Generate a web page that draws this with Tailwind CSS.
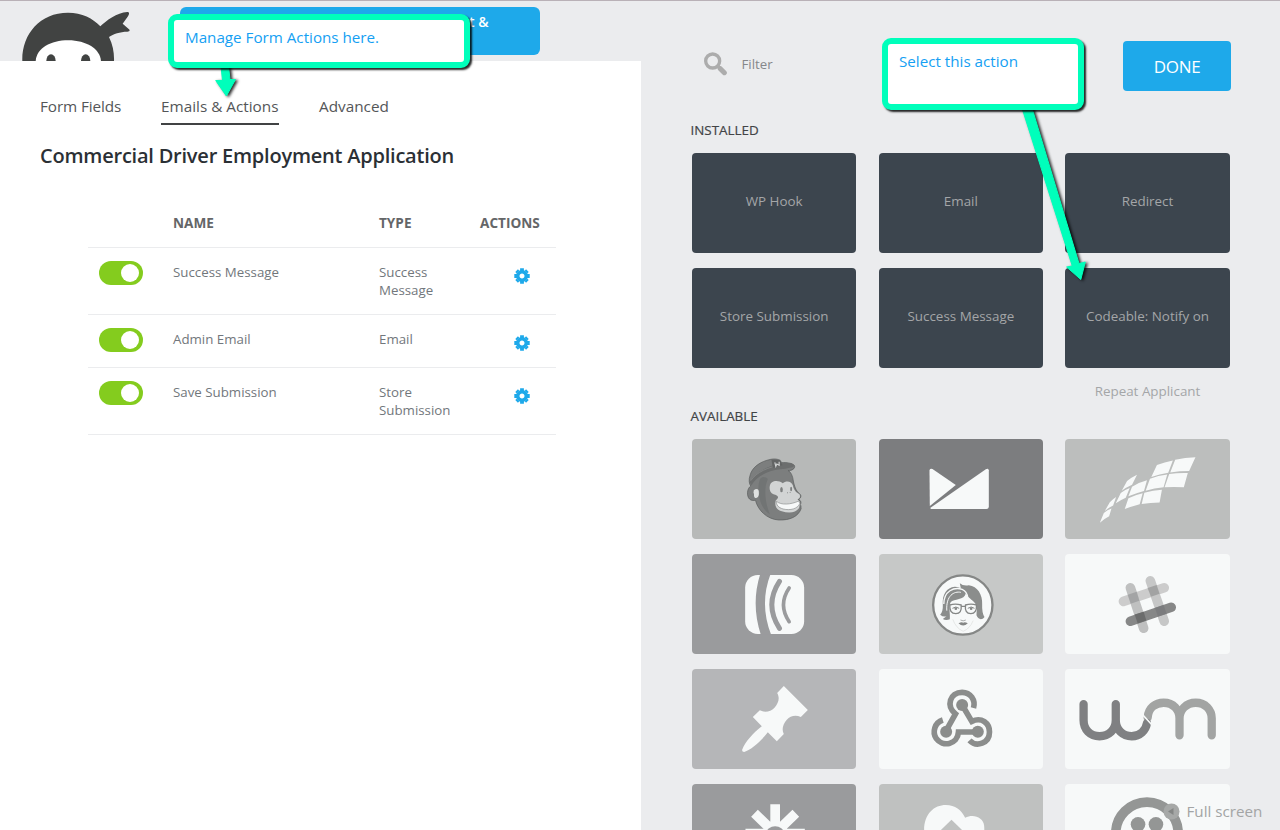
<!DOCTYPE html>
<html lang="en">
<head>
<meta charset="utf-8">
<title>Form Builder</title>
<script src="https://cdn.jsdelivr.net/npm/@tailwindcss/browser@4"></script>
</head>
<body class="relative w-[1280px] h-[830px] overflow-hidden bg-[#ebecee] font-['Open_Sans','Noto_Sans',sans-serif]">
<div class="flex h-[830px] overflow-hidden border-t border-[#b9b1b7]">
  <!-- Form side -->
  <main class="w-[641px] flex flex-col shrink-0">
    <header class="h-[60px] flex items-start shrink-0 pl-[20px]">
      <svg class="w-[112px] h-[60px] mr-[48px]" viewBox="60 3 336 180">
        <path d="M67 185C64 105 118 38 204 38C246 38 279 55 301 79C320 61 350 38 382 36C389 36 388 42 384 49L368 71L387 88C391 92 388 95 382 95C360 95 340 102 327 111C339 135 343 160 342 185Z" fill="#414342"/>
        <path d="M107 185C108 146 151 121 205 121C260 121 302 148 303 185Z" fill="#fff"/>
        <ellipse cx="153" cy="182" rx="14" ry="19" fill="#414342"/><ellipse cx="257" cy="182" rx="14" ry="19" fill="#414342"/>
      </svg>
      <div class="mt-[6px] w-[360px] h-[48px] rounded-[6px] bg-[#1ea9ea] pl-[289px] pt-[6px] text-white text-[14px] leading-[18px] font-semibold">t &amp;</div>
    </header>
    <section class="grow bg-white pl-[40px]">
      <nav class="flex pt-[32px] gap-[40px] text-[15.3px] leading-[26px] text-[#545658]">
        <a class="w-[81px] whitespace-nowrap tracking-[-0.1px]">Form Fields</a>
        <a class="w-[118px] whitespace-nowrap border-b-2 border-[#414344] h-[32px]">Emails &amp; Actions</a>
        <a class="whitespace-nowrap">Advanced</a>
      </nav>
      <h1 class="mt-[16px] text-[20px] leading-[30px] font-semibold text-[#2b3035] whitespace-nowrap tracking-[-0.22px]">Commercial Driver Employment Application</h1>
      <div class="ml-[48px] mt-[29px] w-[468px] text-[13.3px] leading-[18px] text-[#72777c]">
        <div class="grid grid-cols-[85px_206px_101px_76px] h-[48px] pt-[14px] border-b border-[#ebecee] font-bold text-[13.6px] text-[#646668]">
          <span></span><span>NAME</span><span>TYPE</span><span>ACTIONS</span>
        </div>
        <div class="grid grid-cols-[85px_206px_101px_76px] h-[67px] pt-[15px] border-b border-[#ebecee]">
          <span class="ml-[11px] -mt-[2px] w-[44px] h-[24px] rounded-full bg-[#84cc1e] flex items-center justify-end pr-[4px]"><i class="size-[18px] rounded-full bg-white"></i></span>
          <span>Success Message</span><span>Success<br>Message</span>
          <svg class="ml-[34px] mt-[4.5px] size-[16px]" viewBox="-8 -8 16 16"><circle r="4.3" fill="none" stroke="#1ea9ea" stroke-width="3.6"/><path d="M0-7.7V-5M0 7.7V5M-7.7 0H-5M7.7 0H5M-5.4-5.4L-4-4M5.4 5.4L4 4M-5.4 5.4L-4 4M5.4-5.4L4-4" stroke="#1ea9ea" stroke-width="3.8"/></svg>
        </div>
        <div class="grid grid-cols-[85px_206px_101px_76px] h-[53px] pt-[15px] border-b border-[#ebecee]">
          <span class="ml-[11px] -mt-[2px] w-[44px] h-[24px] rounded-full bg-[#84cc1e] flex items-center justify-end pr-[4px]"><i class="size-[18px] rounded-full bg-white"></i></span>
          <span>Admin Email</span><span>Email</span>
          <svg class="ml-[34px] mt-[4.5px] size-[16px]" viewBox="-8 -8 16 16"><circle r="4.3" fill="none" stroke="#1ea9ea" stroke-width="3.6"/><path d="M0-7.7V-5M0 7.7V5M-7.7 0H-5M7.7 0H5M-5.4-5.4L-4-4M5.4 5.4L4 4M-5.4 5.4L-4 4M5.4-5.4L4-4" stroke="#1ea9ea" stroke-width="3.8"/></svg>
        </div>
        <div class="grid grid-cols-[85px_206px_101px_76px] h-[67px] pt-[15px] border-b border-[#ebecee]">
          <span class="ml-[11px] -mt-[2px] w-[44px] h-[24px] rounded-full bg-[#84cc1e] flex items-center justify-end pr-[4px]"><i class="size-[18px] rounded-full bg-white"></i></span>
          <span>Save Submission</span><span>Store<br>Submission</span>
          <svg class="ml-[34px] mt-[4.5px] size-[16px]" viewBox="-8 -8 16 16"><circle r="4.3" fill="none" stroke="#1ea9ea" stroke-width="3.6"/><path d="M0-7.7V-5M0 7.7V5M-7.7 0H-5M7.7 0H5M-5.4-5.4L-4-4M5.4 5.4L4 4M-5.4 5.4L-4 4M5.4-5.4L4-4" stroke="#1ea9ea" stroke-width="3.8"/></svg>
        </div>
      </div>
    </section>
  </main>
  <!-- Action drawer -->
  <aside class="w-[639px] pl-[51px] pt-[40px] shrink-0">
    <div class="flex items-start w-[539px] h-[50px]">
      <svg class="ml-[12px] mt-[11px] size-[24px]" viewBox="72 96 72 72" fill="none" stroke="#acacac"><circle cx="98" cy="123" r="21" stroke-width="10"/><path d="M113 138L120 145" stroke-width="11"/><path d="M121 146L133 158" stroke-width="15" stroke-linecap="round"/></svg>
      <span class="ml-[13.5px] mt-[13px] text-[13.3px] leading-[20px] text-[#85878a]">Filter</span>
      <button class="ml-auto w-[108px] h-[50px] rounded-[4px] bg-[#1ea9ea] text-white text-[17px] pt-[2px] tracking-[-0.3px]">DONE</button>
    </div>
    <h2 class="mt-[29px] -ml-[1.5px] text-[13.4px] leading-[20px] font-medium text-[#424446] [-webkit-text-stroke:0.2px_#424446]">INSTALLED</h2>
    <div class="mt-[13px] grid grid-cols-[164.3px_164.3px_164.3px] auto-rows-[100px] gap-x-[22.4px] gap-y-[15px] text-[13.4px] leading-[75px] text-center text-[#a4a6a8] whitespace-nowrap">
      <div class="rounded-[4px] bg-[#3c454e] pt-[11px]">WP Hook</div>
      <div class="rounded-[4px] bg-[#3c454e] pt-[11px]">Email</div>
      <div class="rounded-[4px] bg-[#3c454e] pt-[11px]">Redirect</div>
      <div class="rounded-[4px] bg-[#3c454e] pt-[11px]">Store Submission</div>
      <div class="rounded-[4px] bg-[#3c454e] pt-[11px]">Success Message</div>
      <div class="rounded-[4px] bg-[#3c454e] pt-[11px]">Codeable: Notify on<br>Repeat Applicant</div>
    </div>
    <h2 class="mt-[38px] -ml-[1.5px] text-[13.4px] leading-[20px] font-medium text-[#424446] [-webkit-text-stroke:0.2px_#424446]">AVAILABLE</h2>
    <div class="mt-[13px] grid grid-cols-[164.3px_164.3px_164.3px] auto-rows-[100px] gap-x-[22.4px] gap-y-[15px]">
      <!-- MailChimp -->
      <svg class="size-full rounded-[4px] bg-[#b7b9b8]" viewBox="-114 -3 492 300">
        <path d="M62 138C50 145 49 168 58 177C63 182 70 182 76 181C83 210 110 238 146 240C180 241 204 230 213 206C212 202 214 198 210 194C214 189 213 182 205 178C214 174 214 165 208 161C196 152 193 137 190 126C188 108 182 95 174 92C185 92 196 86 193 77C188 69 168 67 154 68C151 58 136 55 122 58C90 64 66 82 60 105C55 120 57 132 62 138Z" fill="#7c7e7e" stroke="#585a5a" stroke-width="2"/>
        <path d="M64 136C78 110 110 93 150 88C172 85 190 82 193 77C187 68 166 67 154 70C120 76 78 93 58 126Z" fill="#6c6e6e"/>
        <path d="M62 122C78 97 115 80 152 76" fill="none" stroke="#8e9090" stroke-width="2"/>
        <path d="M124 59L150 59L157 76L128 84Z" fill="#626464"/>
        <path d="M134 67L137 79L140 72L147 76L147 65" fill="none" stroke="#d0d2d2" stroke-width="3.500"/>
        <path d="M71 151C80 143 88 149 87 159C86 169 82 177 74 173C69 168 74 163 70 158Z" fill="#dfe1e0"/>
        <path d="M90 116C79 140 84 202 119 223C105 186 100 148 113 117C106 110 98 109 90 116Z" fill="#5e6060" opacity=".35"/>
        <path d="M119 138C121 121 144 118 158 130C167 121 184 123 188 136C191 151 198 158 208 163C211 169 210 175 202 178L210 186L207 203C198 220 174 220 155 214C136 208 133 195 137 181C150 171 142 166 130 163C120 158 117 149 119 138Z" fill="#d2d4d4"/>
        <path d="M139 184C152 196 182 194 206 183L209 191C201 207 181 212 159 207C145 203 138 195 139 184Z" fill="#f7f9f9" stroke="#8a8c8c" stroke-width="2"/>
        <ellipse cx="154" cy="149" rx="4" ry="8" fill="#7e8080"/><ellipse cx="183" cy="147" rx="3" ry="7" fill="#7e8080"/><circle cx="172" cy="158" r="1.500" fill="#787a7a"/><circle cx="180" cy="157" r="1.500" fill="#787a7a"/>
      </svg>
      <!-- Campaign Monitor -->
      <svg class="size-full rounded-[4px] bg-[#7c7d7f]" viewBox="-108 -3 492 300" fill="#f7f9f9">
        <path d="M43 90Q46 84 52 87L122 135L44 198Z"/><path d="M45 204L212 88Q219 84 221 91V201Q220 207 214 207H48Z"/>
      </svg>
      <!-- Tilted grid -->
      <svg class="size-full rounded-[4px] bg-[#bcbebd]" viewBox="0 -3 495 300" fill="#f7f9f9">
        <path d="M277 75Q300 66 325 61L311 98Q285 102 260 111Z"/><path d="M332 59Q362 52 393 51L374 93Q345 93 317 97Z"/>
        <path d="M256 116Q281 106 308 103L297 142Q269 145 243 152Z"/><path d="M314 102Q341 98 370 99L358 142Q328 140 300 142Z"/>
        <path d="M202 140Q224 127 247 121L238 153Q212 160 191 169Z"/><path d="M191 175Q211 165 234 160L225 193Q200 200 180 207Z"/>
        <path d="M239 158Q265 151 292 149L285 188Q257 189 231 192Z"/><path d="M187 123Q200 112 217 104L202 134Q184 142 171 152Z"/>
        <path d="M168 159Q181 149 195 144L183 173Q165 181 153 190Z"/><path d="M135 187Q144 177 154 171L145 197Q132 203 120 213Z"/>
        <path d="M117 219Q128 210 140 206L133 229Q117 237 105 249Z"/>
      </svg>
      <!-- AWeber -->
      <svg class="size-full rounded-[4px] bg-[#9a9b9d]" viewBox="-114 342 492 300">
        <rect x="45" y="405" width="177" height="177" rx="38" fill="#f7f9f9"/>
        <path d="M90 403H121Q87 492 123 584H92Q62 492 90 403Z" fill="#9a9b9d"/>
        <path d="M148 424Q102 494 148 565" fill="none" stroke="#9a9b9d" stroke-width="15" stroke-linecap="round"/>
        <path d="M177 444Q143 494 177 545" fill="none" stroke="#9a9b9d" stroke-width="11" stroke-linecap="round"/>
      </svg>
      <!-- Emma -->
      <svg class="size-full rounded-[4px] bg-[#c6c8c7]" viewBox="-108 342 492 300">
        <circle cx="143" cy="495" r="89" fill="#f7f9f9" stroke="#858786" stroke-width="7"/>
        <path d="M75 524Q84 514 83 494C81 462 94 443 119 440C129 441 134 443 137 445L134 430Q144 439 161 436C187 438 203 466 201 492Q200 519 208 531C200 542 188 538 184 526L185 500C178 480 160 478 152 460C148 482 116 476 107 486C99 500 106 522 104 538Q92 543 83 537L94 529Q84 532 75 524Z" fill="#8b8d8c"/>
        <path d="M86 492C86 453 117 440 141 448C151 452 157 463 158 474" fill="none" stroke="#f7f9f9" stroke-width="4"/>
        <path d="M95 512C92 466 117 453 137 457" fill="none" stroke="#f7f9f9" stroke-width="3"/>
        <path d="M104 495Q120 490 138 495C140 514 134 521 122 521C108 521 103 511 104 495ZM151 495Q168 490 184 495C185 512 179 521 167 521C154 521 149 512 151 495ZM137 499H152" fill="#f7f9f9" stroke="#858786" stroke-width="4"/>
        <path d="M112 505Q122 497 132 505M158 505Q168 497 178 505" fill="none" stroke="#858786" stroke-width="3"/><circle cx="122" cy="506" r="4" fill="#858786"/><circle cx="168" cy="506" r="4" fill="#858786"/>
        <path d="M136 540Q144 545 152 540" fill="none" stroke="#858786" stroke-width="2"/><path d="M130 550Q140 545 144 548Q149 545 158 550Q144 563 130 550Z" fill="#858786"/>
        <path d="M113 538Q122 564 144 574Q164 566 174 542" fill="none" stroke="#dcdedd" stroke-width="2"/>
      </svg>
      <!-- Slack -->
      <svg class="size-full rounded-[4px] bg-[#f7f9f9]" viewBox="0 342 495 300" fill="none" stroke-linecap="round" stroke-width="29">
        <path d="M176 484L299 443" stroke="#ccc"/><path d="M197 443L237 565" stroke="#bfc0c0"/><path d="M257 422L299 544" stroke="#c6c7c7"/>
        <path d="M197 544L320 502" stroke="#868787"/>
        <g stroke="none"><path d="M189 464L216 455L224 482L198 491Z" fill="#a3a4a5"/><path d="M249 444L276 435L285 461L259 470Z" fill="#a2a3a3"/><path d="M210 524L237 515L245 542L219 551Z" fill="#6b6c6c"/><path d="M271 504L297 495L306 521L280 530Z" fill="#7b7c7e"/></g>
      </svg>
      <!-- Pushpin -->
      <svg class="size-full rounded-[4px] bg-[#b5b6b8]" viewBox="-114 12 492 300" fill="#f7f9f9">
        <path d="M161 63L233 135L212 156C196 148 180 153 170 164C158 177 154 194 161 207L140 229L113 202C91 230 65 252 42 261Q35 261 36 254C46 230 67 206 95 184L68 156L89 136C104 144 122 140 133 128C145 115 150 99 141 84Z"/>
      </svg>
      <!-- Webhooks -->
      <svg class="size-full rounded-[4px] bg-[#f7f9f9]" viewBox="-93 12 492 300" fill="none" stroke="#8b8d8c">
        <path d="M190 129C197 105 181 82 156 82C119 82 107 123 136 147L108 197" stroke-width="17"/>
        <path d="M156 120L185 169C215 155 238 175 238 201C238 235 199 248 178 226" stroke-width="17"/>
        <path d="M98 165C73 173 66 201 78 220C97 247 142 240 145 201H203" stroke-width="17"/>
        <g fill="#8b8d8c" stroke="none"><circle cx="156" cy="120" r="18"/><circle cx="108" cy="200" r="18"/><circle cx="203" cy="200" r="18"/></g>
      </svg>
      <!-- WebMerge -->
      <svg class="size-full rounded-[4px] bg-[#f7f9f9]" viewBox="15 12 495 300" fill="none" stroke-width="25" stroke-linecap="round">
        <path d="M264 158C266 128 288 113 312 113C342 113 360 135 360 160V211M360 160C360 135 380 113 409 113C438 113 457 135 457 160V211" stroke="#a2a4a3"/>
        <path d="M71 117V166C71 194 91 214 119 214C147 214 168 194 168 166V117M168 166C168 194 189 214 216 214C241 214 259 196 262 174" stroke="#7f8082"/>
        <path d="M249 149L278 181" stroke="#f7f9f9" stroke-width="5"/>
      </svg>
      <!-- Zapier -->
      <svg class="size-full rounded-[4px] bg-[#9a9b9d]" viewBox="-114 357 492 300">
        <path d="M135 418V590M46 506H224M73 445L197 564M197 445L73 564" stroke="#f7f9f9" stroke-width="29"/><ellipse cx="135" cy="504" rx="26" ry="20" fill="#9a9b9d"/>
      </svg>
      <!-- Cloud upload -->
      <svg class="size-full rounded-[4px] bg-[#bfc1c0]" viewBox="-93 357 492 300">
        <path d="M42 500C40 448 71 420 107 420C135 420 154 435 165 458C190 445 220 457 222 482C226 530 205 540 180 550H65Q42 530 42 500Z" fill="#f7f9f9"/><path d="M82 505L124 464L166 505Z" fill="#bfc1c0"/>
      </svg>
      <!-- Twilio -->
      <svg class="size-full rounded-[4px] bg-[#f7f9f9]" viewBox="15 357 495 300">
        <circle cx="262" cy="505" r="94" fill="none" stroke="#949695" stroke-width="29"/><g fill="#949695"><circle cx="235" cy="478" r="22"/><circle cx="289" cy="478" r="22"/><circle cx="235" cy="532" r="22"/><circle cx="289" cy="532" r="22"/></g>
      </svg>
    </div>
  </aside>
</div>
<!-- Full screen toggle lies over the drawer -->
<div class="absolute left-[1163px] top-[799px] flex items-center h-[24px] text-[15.200px] leading-[24px] text-[#a3a5a5] whitespace-nowrap">
  <svg class="size-[17px] mr-[6.500px]" viewBox="0 0 17 17"><circle cx="8.5" cy="8.5" r="8" fill="#a6a8a7"/><path d="M5 8.5L10.5 5V12Z" fill="#848685"/></svg>Full screen
</div>
<!-- Tutorial arrows and callouts -->
<svg class="absolute left-0 top-0 w-[1280px] h-[830px] drop-shadow-[2px_1px_1.5px_rgba(0,0,0,0.85)]" viewBox="0 0 1280 830" fill="#00ffbb" stroke="#00ffbb" stroke-width="1" stroke-linejoin="round">
  <path d="M221 66H228.500L230 79.500L235.500 79.500L226.400 96L215.700 80.500L222.500 80.500Z"/>
  <path d="M1022 108H1032L1079 263.500L1085.300 262L1080.800 279.500L1066.600 267L1072.300 266Z"/>
</svg>
<div class="absolute left-[168px] top-[14px] w-[302px] h-[54px] rounded-[9px] border-6 border-[#00ffbb] bg-white shadow-[2px_2px_2px_rgba(0,0,0,0.85)] pl-[11px] pt-[5px] text-[15.200px] leading-[24px] text-[#159ff3] whitespace-nowrap">Manage Form Actions here.</div>
<div class="absolute left-[882px] top-[38px] w-[202px] h-[72px] rounded-[9px] border-6 border-[#00ffbb] bg-white shadow-[2px_2px_2px_rgba(0,0,0,0.85)] pl-[11px] pt-[5px] text-[15.200px] leading-[24px] text-[#159ff3] whitespace-nowrap">Select this action</div>
</body>
</html>
